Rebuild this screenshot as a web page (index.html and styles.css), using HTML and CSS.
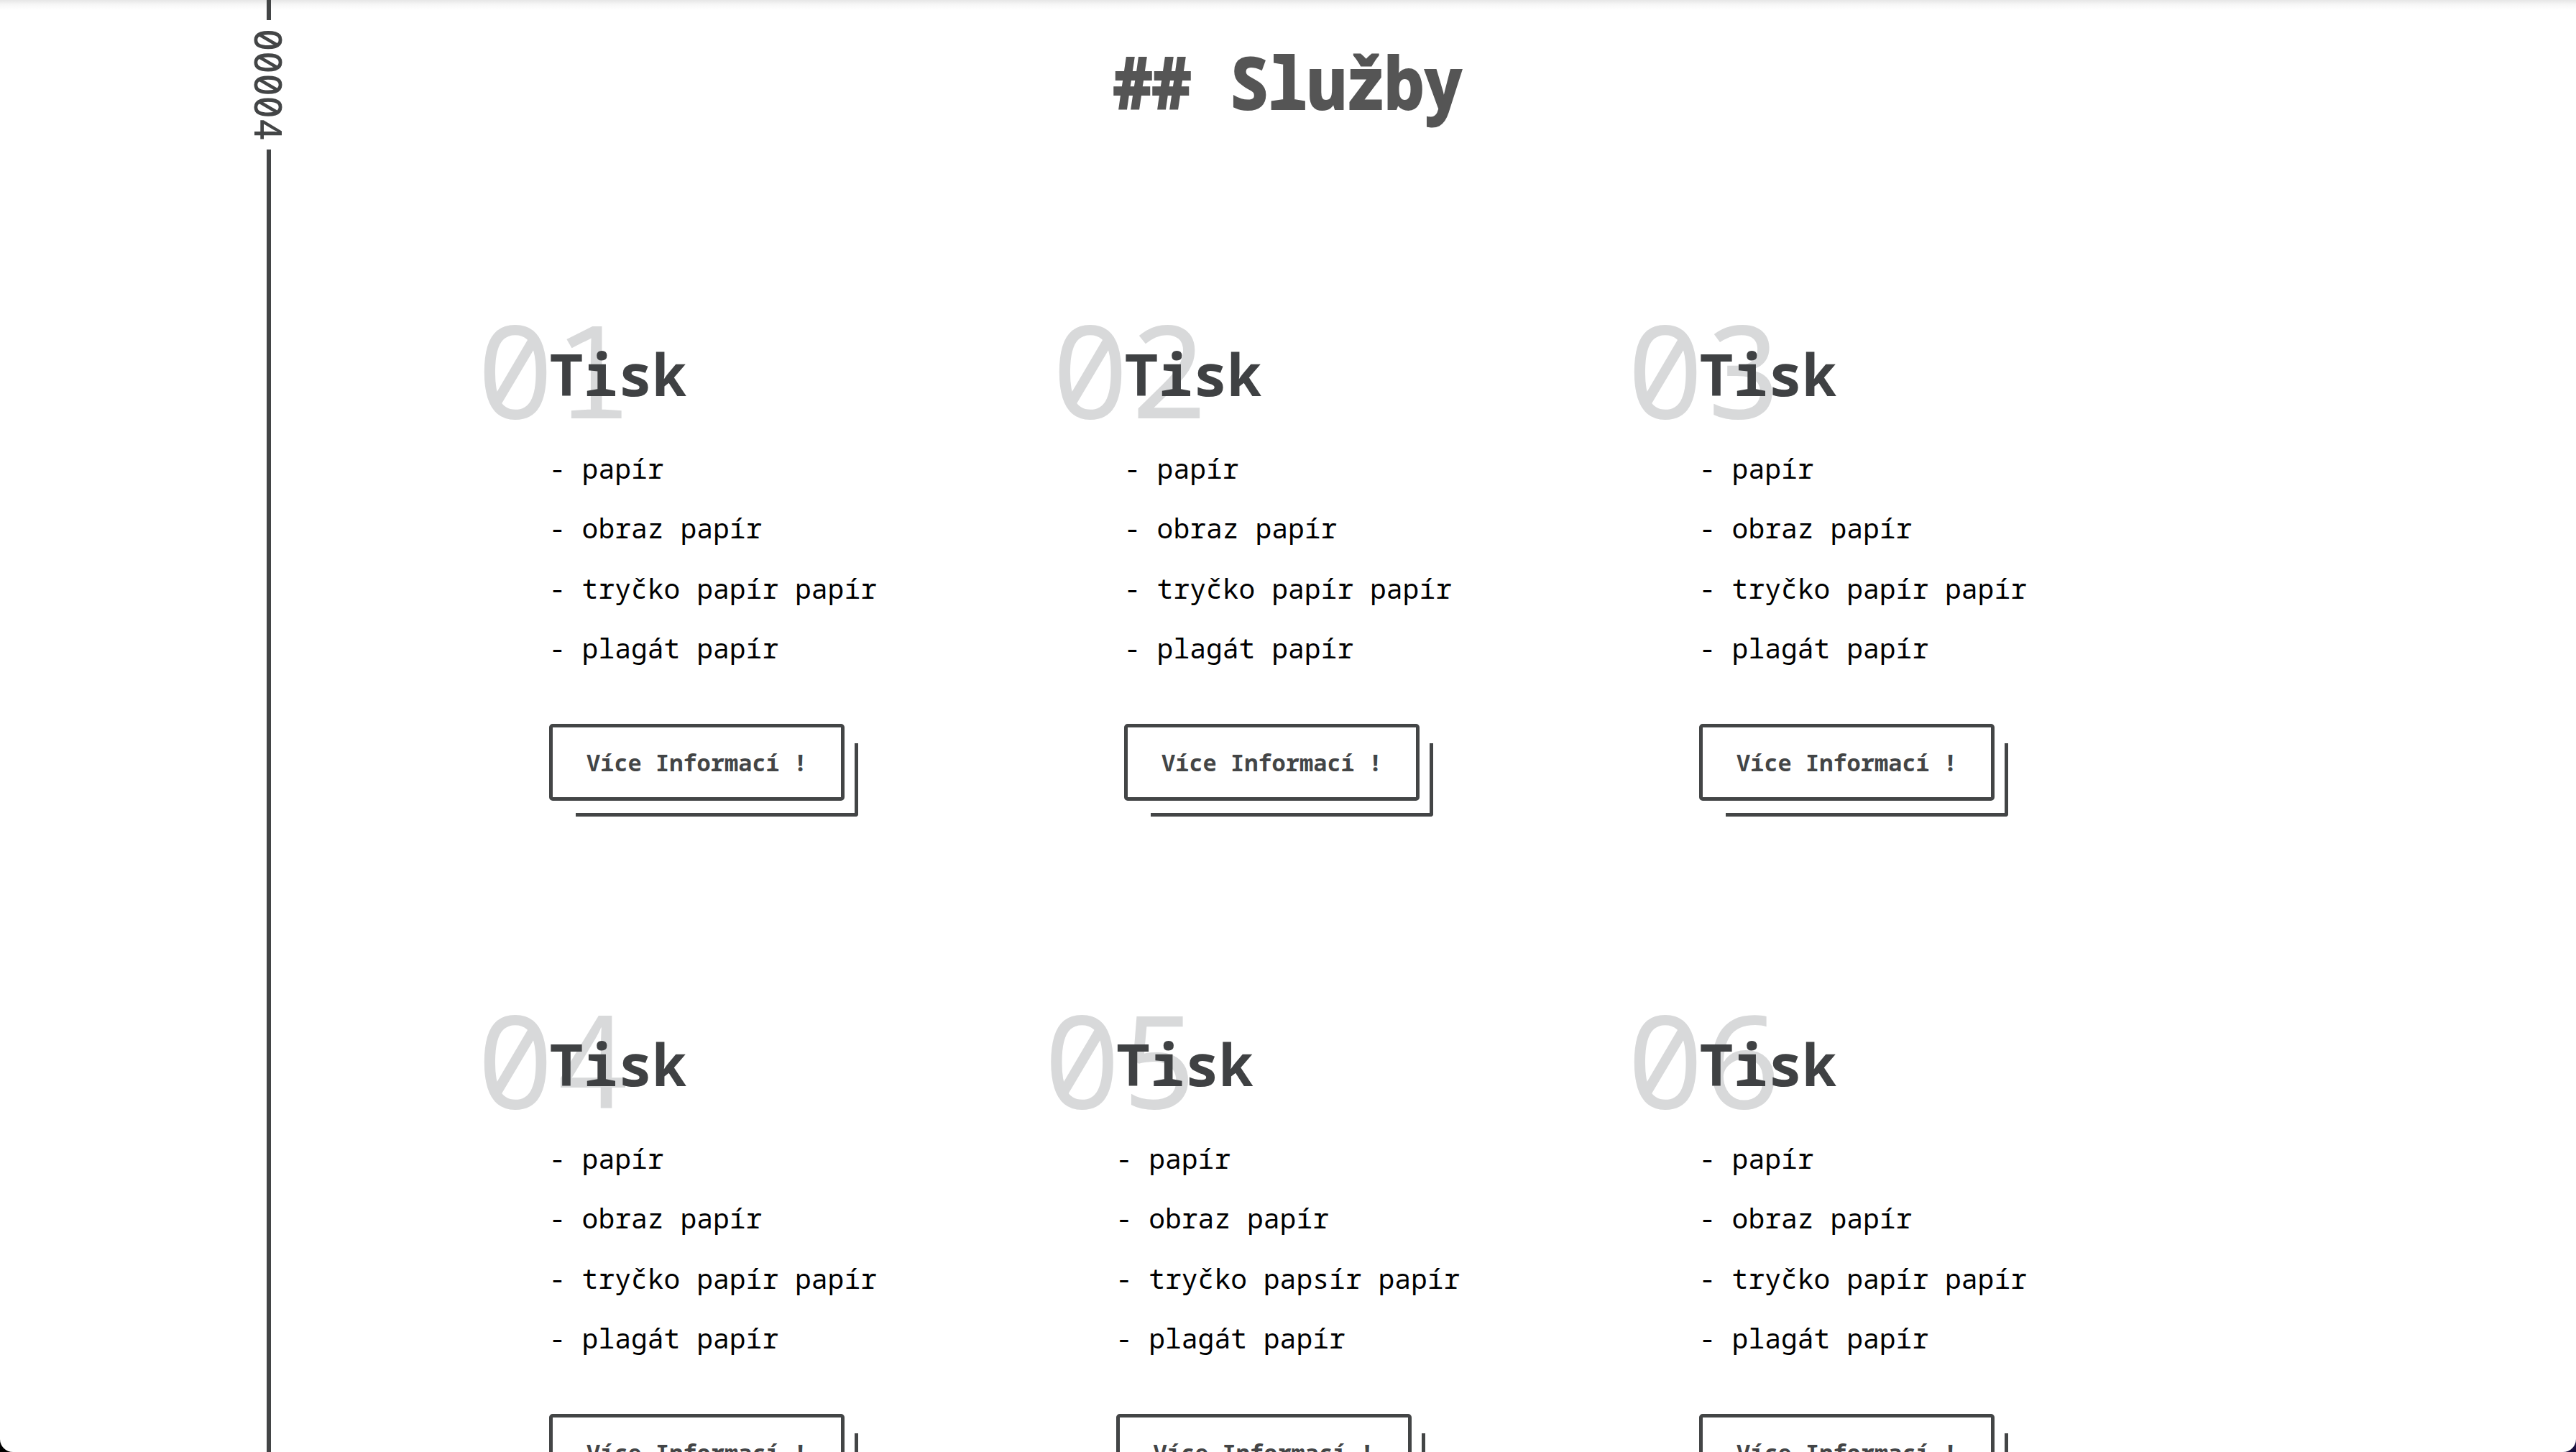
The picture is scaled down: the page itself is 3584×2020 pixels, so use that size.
FILE: index.html
```html
<!DOCTYPE html>
<html lang="cs">
<head>
<meta charset="utf-8">
<title>Služby</title>
<link rel="stylesheet" href="styles.css">
</head>
<body>
<div class="screen">
  <aside class="rail">
    <div class="rail-line rail-line-top"></div>
    <div class="rail-label">00004</div>
    <div class="rail-line rail-line-rest"></div>
  </aside>
  <main class="main">
    <h2 class="section-title">## Služby</h2>
    <div class="cards">
      <article class="card">
        <span class="card-num">01</span>
        <h3 class="card-title">Tisk</h3>
        <ul class="card-list">
          <li>- papír</li>
          <li>- obraz papír</li>
          <li>- tryčko papír papír</li>
          <li>- plagát papír</li>
        </ul>
        <button class="card-btn">Více Informací !</button>
      </article>
      <article class="card">
        <span class="card-num">02</span>
        <h3 class="card-title">Tisk</h3>
        <ul class="card-list">
          <li>- papír</li>
          <li>- obraz papír</li>
          <li>- tryčko papír papír</li>
          <li>- plagát papír</li>
        </ul>
        <button class="card-btn">Více Informací !</button>
      </article>
      <article class="card">
        <span class="card-num">03</span>
        <h3 class="card-title">Tisk</h3>
        <ul class="card-list">
          <li>- papír</li>
          <li>- obraz papír</li>
          <li>- tryčko papír papír</li>
          <li>- plagát papír</li>
        </ul>
        <button class="card-btn">Více Informací !</button>
      </article>
      <article class="card">
        <span class="card-num">04</span>
        <h3 class="card-title">Tisk</h3>
        <ul class="card-list">
          <li>- papír</li>
          <li>- obraz papír</li>
          <li>- tryčko papír papír</li>
          <li>- plagát papír</li>
        </ul>
        <button class="card-btn">Více Informací !</button>
      </article>
      <article class="card">
        <span class="card-num">05</span>
        <h3 class="card-title">Tisk</h3>
        <ul class="card-list">
          <li>- papír</li>
          <li>- obraz papír</li>
          <li>- tryčko papsír papír</li>
          <li>- plagát papír</li>
        </ul>
        <button class="card-btn">Více Informací !</button>
      </article>
      <article class="card">
        <span class="card-num">06</span>
        <h3 class="card-title">Tisk</h3>
        <ul class="card-list">
          <li>- papír</li>
          <li>- obraz papír</li>
          <li>- tryčko papír papír</li>
          <li>- plagát papír</li>
        </ul>
        <button class="card-btn">Více Informací !</button>
      </article>
    </div>
  </main>
</div>
</body>
</html>
```

FILE: styles.css
```css
* {
  box-sizing: border-box;
}

html, body {
  margin: 0;
  padding: 0;
  height: 100%;
}

body {
  background: linear-gradient(90deg, #000 0%, #0d0a22 60%, #1a1240 100%);
  font-family: "Noto Sans Mono", "DejaVu Sans Mono", "Liberation Mono", monospace;
  overflow: hidden;
}

.screen {
  height: 2020px;
  background: linear-gradient(#e6e6e6 0, #f6f6f6 6px, #ffffff 14px) no-repeat top left / 100% 14px, #ffffff;
  border-radius: 0 0 18px 18px;
  overflow: hidden;
  display: grid;
  grid-template-columns: 400px 1fr 400px;
}

/* left rail */
.rail {
  display: flex;
  flex-direction: column;
  align-items: center;
  width: 52px;
  margin-left: 348px;
}

.rail-line {
  width: 6px;
  background: #434546;
}

.rail-line-top {
  height: 28px;
}

.rail-line-rest {
  flex: 1;
}

.rail-label {
  writing-mode: vertical-rl;
  font-size: 52px;
  line-height: 54px;
  font-weight: 500;
  color: #434546;
  padding: 12px 0;
}

/* main */
.main {
  display: flex;
  flex-direction: column;
  align-items: center;
}

.section-title {
  margin: 63px 0 0;
  font-size: 100px;
  line-height: 1;
  font-weight: 800;
  color: #555555;
  -webkit-text-stroke: 2px #555555;
  transform: scaleX(0.9);
}

.cards {
  margin-top: 317px;
  display: grid;
  grid-template-columns: repeat(3, 800px);
  row-gap: 326px;
  justify-items: center;
}

.card {
  position: relative;
  display: flex;
  flex-direction: column;
  align-items: flex-start;
}

.card-num {
  position: absolute;
  left: -101px;
  top: -57px;
  font-size: 180px;
  line-height: 1;
  color: #d8d9da;
  z-index: 0;
}

.card-title {
  position: relative;
  z-index: 1;
  margin: 0;
  font-size: 80px;
  line-height: 1;
  font-weight: 700;
  color: #3f4143;
}

.card-list {
  list-style: none;
  margin: 50px 0 0;
  padding: 0;
  font-size: 38px;
  line-height: 83.3px;
  color: #000;
}

.card-list li {
  white-space: pre;
}

.card-btn {
  position: relative;
  margin-top: 64px;
  padding: 30px 47px;
  border: 5px solid #434546;
  border-radius: 5px;
  background: #fff;
  font-family: inherit;
  font-size: 32px;
  line-height: 37px;
  font-weight: 700;
  color: #434546;
}

.card-btn::after {
  content: "";
  position: absolute;
  top: 22px;
  left: 32px;
  right: -24px;
  bottom: -27px;
  border-right: 5px solid #434546;
  border-bottom: 5px solid #434546;
  border-bottom-right-radius: 4px;
}
```
